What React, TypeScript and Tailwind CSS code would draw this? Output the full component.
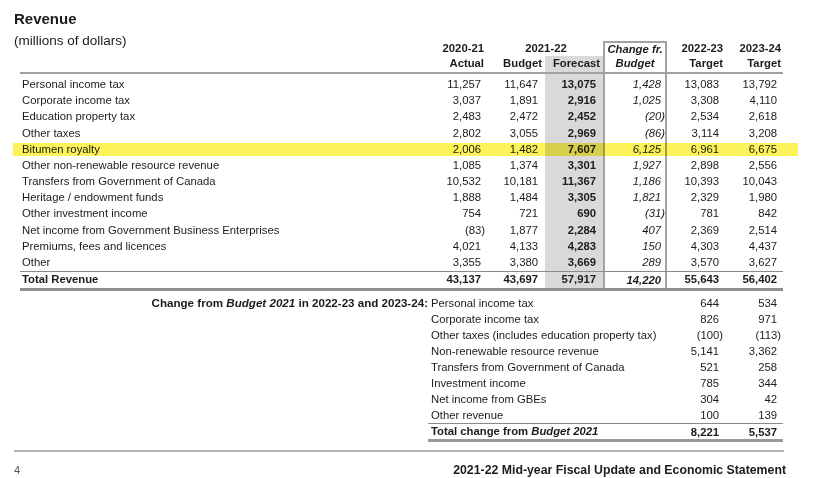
import React from "react";

const rows = [
  ["Personal income tax", "11,257", "11,647", "13,075", "1,428", "13,083", "13,792"],
  ["Corporate income tax", "3,037", "1,891", "2,916", "1,025", "3,308", "4,110"],
  ["Education property tax", "2,483", "2,472", "2,452", "(20)", "2,534", "2,618"],
  ["Other taxes", "2,802", "3,055", "2,969", "(86)", "3,114", "3,208"],
  ["Bitumen royalty", "2,006", "1,482", "7,607", "6,125", "6,961", "6,675"],
  ["Other non-renewable resource revenue", "1,085", "1,374", "3,301", "1,927", "2,898", "2,556"],
  ["Transfers from Government of Canada", "10,532", "10,181", "11,367", "1,186", "10,393", "10,043"],
  ["Heritage / endowment funds", "1,888", "1,484", "3,305", "1,821", "2,329", "1,980"],
  ["Other investment income", "754", "721", "690", "(31)", "781", "842"],
  ["Net income from Government Business Enterprises", "(83)", "1,877", "2,284", "407", "2,369", "2,514"],
  ["Premiums, fees and licences", "4,021", "4,133", "4,283", "150", "4,303", "4,437"],
  ["Other", "3,355", "3,380", "3,669", "289", "3,570", "3,627"],
];

const changes = [
  ["Personal income tax", "644", "534"],
  ["Corporate income tax", "826", "971"],
  ["Other taxes (includes education property tax)", "(100)", "(113)"],
  ["Non-renewable resource revenue", "5,141", "3,362"],
  ["Transfers from Government of Canada", "521", "258"],
  ["Investment income", "785", "344"],
  ["Net income from GBEs", "304", "42"],
  ["Other revenue", "100", "139"],
];

const grid = "grid grid-cols-[408px_59px_58px_58px_64px_58px_58px]";

// negatives hang the closing paren past the column edge
const Num = ({ v }: { v: string }) =>
  v.startsWith("(") ? <span className="-mr-[4px]">{v}</span> : <span>{v}</span>;

const Row = ({ r, bold = false, h = "h-[16.2px]" }: { r: string[]; bold?: boolean; h?: string }) => (
  <div className={`${grid} ${h} items-center`}>
    <div className={`pl-[2px] ${bold ? "font-bold" : ""}`}>{r[0]}</div>
    <div className={`text-right pr-[6px] ${bold ? "font-bold" : ""}`}><Num v={r[1]} /></div>
    <div className={`text-right pr-[7px] ${bold ? "font-bold" : ""}`}><Num v={r[2]} /></div>
    <div className="h-full flex items-center justify-end pr-[7px] font-bold bg-[#d9d9d9]"><Num v={r[3]} /></div>
    <div className={`h-full flex items-center justify-end pr-[4px] italic border-x-2 border-[#a3a3a3] ${bold ? "font-bold pt-[2px]" : ""}`}><Num v={r[4]} /></div>
    <div className={`text-right pr-[6px] ${bold ? "font-bold" : ""}`}><Num v={r[5]} /></div>
    <div className={`text-right pr-[6px] ${bold ? "font-bold" : ""}`}><Num v={r[6]} /></div>
  </div>
);

export default function App() {
  return (
    <div
      className="relative isolate w-[840px] h-[478px] bg-white text-[#1c1c1c] overflow-hidden"
      style={{ fontFamily: '"Liberation Sans", Arial, sans-serif' }}
    >
      <div className="h-[40px] pl-[14px] pt-[10px]">
        <div className="text-[15px] font-bold leading-[18px]">Revenue</div>
        <div className="text-[13.5px] leading-[16px] mt-[5px]">(millions of dollars)</div>
      </div>

      <div className="ml-[20px] w-[763px] text-[11.3px] leading-none">
        {/* header */}
        <div className={`${grid} h-[16px] items-center font-bold pt-[1px]`}>
          <div />
          <div className="text-right pr-[3px]">2020-21</div>
          <div className="col-span-2 text-center pl-[2px]">2021-22</div>
          <div className="h-full flex items-center justify-center italic border-x-2 border-t-2 border-[#a3a3a3] pt-[1px]">Change fr.</div>
          <div className="text-right pr-[2px]">2022-23</div>
          <div className="text-right pr-[2px]">2023-24</div>
        </div>
        <div className={`${grid} h-[16px] items-center font-bold`}>
          <div />
          <div className="text-right pr-[3px]">Actual</div>
          <div className="text-right pr-[3px]">Budget</div>
          <div className="h-full flex items-center justify-end pr-[3px] bg-[#d9d9d9]">Forecast</div>
          <div className="h-full flex items-center justify-center italic border-x-2 border-[#a3a3a3]">Budget</div>
          <div className="text-right pr-[2px]">Target</div>
          <div className="text-right pr-[2px]">Target</div>
        </div>
        <div className="h-[2px] bg-[#a0a0a0]" />
        <div className={`${grid} h-[2.5px]`}>
          <div /><div /><div />
          <div className="bg-[#d9d9d9]" />
          <div className="border-x-2 border-[#a3a3a3]" />
        </div>

        {rows.map((r) => (
          <Row key={r[0]} r={r} />
        ))}
        <div className="h-[1px] bg-[#8a8a8a]" />
        <Row r={["Total Revenue", "43,137", "43,697", "57,917", "14,220", "55,643", "56,402"]} bold h="h-[16.5px]" />
        <div className="h-[3px] bg-[#8f8f8f]" />

        {/* change from budget */}
        <div className="mt-[4px]">
          {changes.map((c, i) => (
            <div key={c[0]} className="grid grid-cols-[408px_239px_58px_58px] h-[16px] items-center">
              <div className="text-right font-bold text-[11.6px]">
                {i === 0 && (
                  <>
                    Change from <i>Budget 2021</i> in 2022-23 and 2023-24:
                  </>
                )}
              </div>
              <div className="pl-[3px] whitespace-nowrap">{c[0]}</div>
              <div className="text-right pr-[6px]"><Num v={c[1]} /></div>
              <div className="text-right pr-[6px]"><Num v={c[2]} /></div>
            </div>
          ))}
          <div className="ml-[408px] h-[1px] bg-[#8a8a8a]" />
          <div className="grid grid-cols-[408px_239px_58px_58px] h-[15px] items-center font-bold">
            <div />
            <div className="pl-[3px]">
              Total change from <i>Budget 2021</i>
            </div>
            <div className="text-right pr-[6px] pt-[2px]">8,221</div>
            <div className="text-right pr-[6px] pt-[2px]">5,537</div>
          </div>
          <div className="ml-[408px] h-[3px] bg-[#9a9a9a]" />
        </div>
      </div>

      <div className="ml-[14px] w-[770px] mt-[8px] h-[2px] bg-[#b4b4b4]" />
      <div className="ml-[14px] w-[772px] mt-[10px] h-[16px] flex items-center justify-between leading-none">
        <span className="text-[11px] text-[#555]">4</span>
        <span className="text-[12.3px] font-bold">2021-22 Mid-year Fiscal Update and Economic Statement</span>
      </div>

      {/* highlighter mark over the bitumen royalty row */}
      <div className="absolute left-[13px] top-[143px] w-[785px] h-[13px] bg-[#fcf25a] mix-blend-multiply" />
    </div>
  );
}
